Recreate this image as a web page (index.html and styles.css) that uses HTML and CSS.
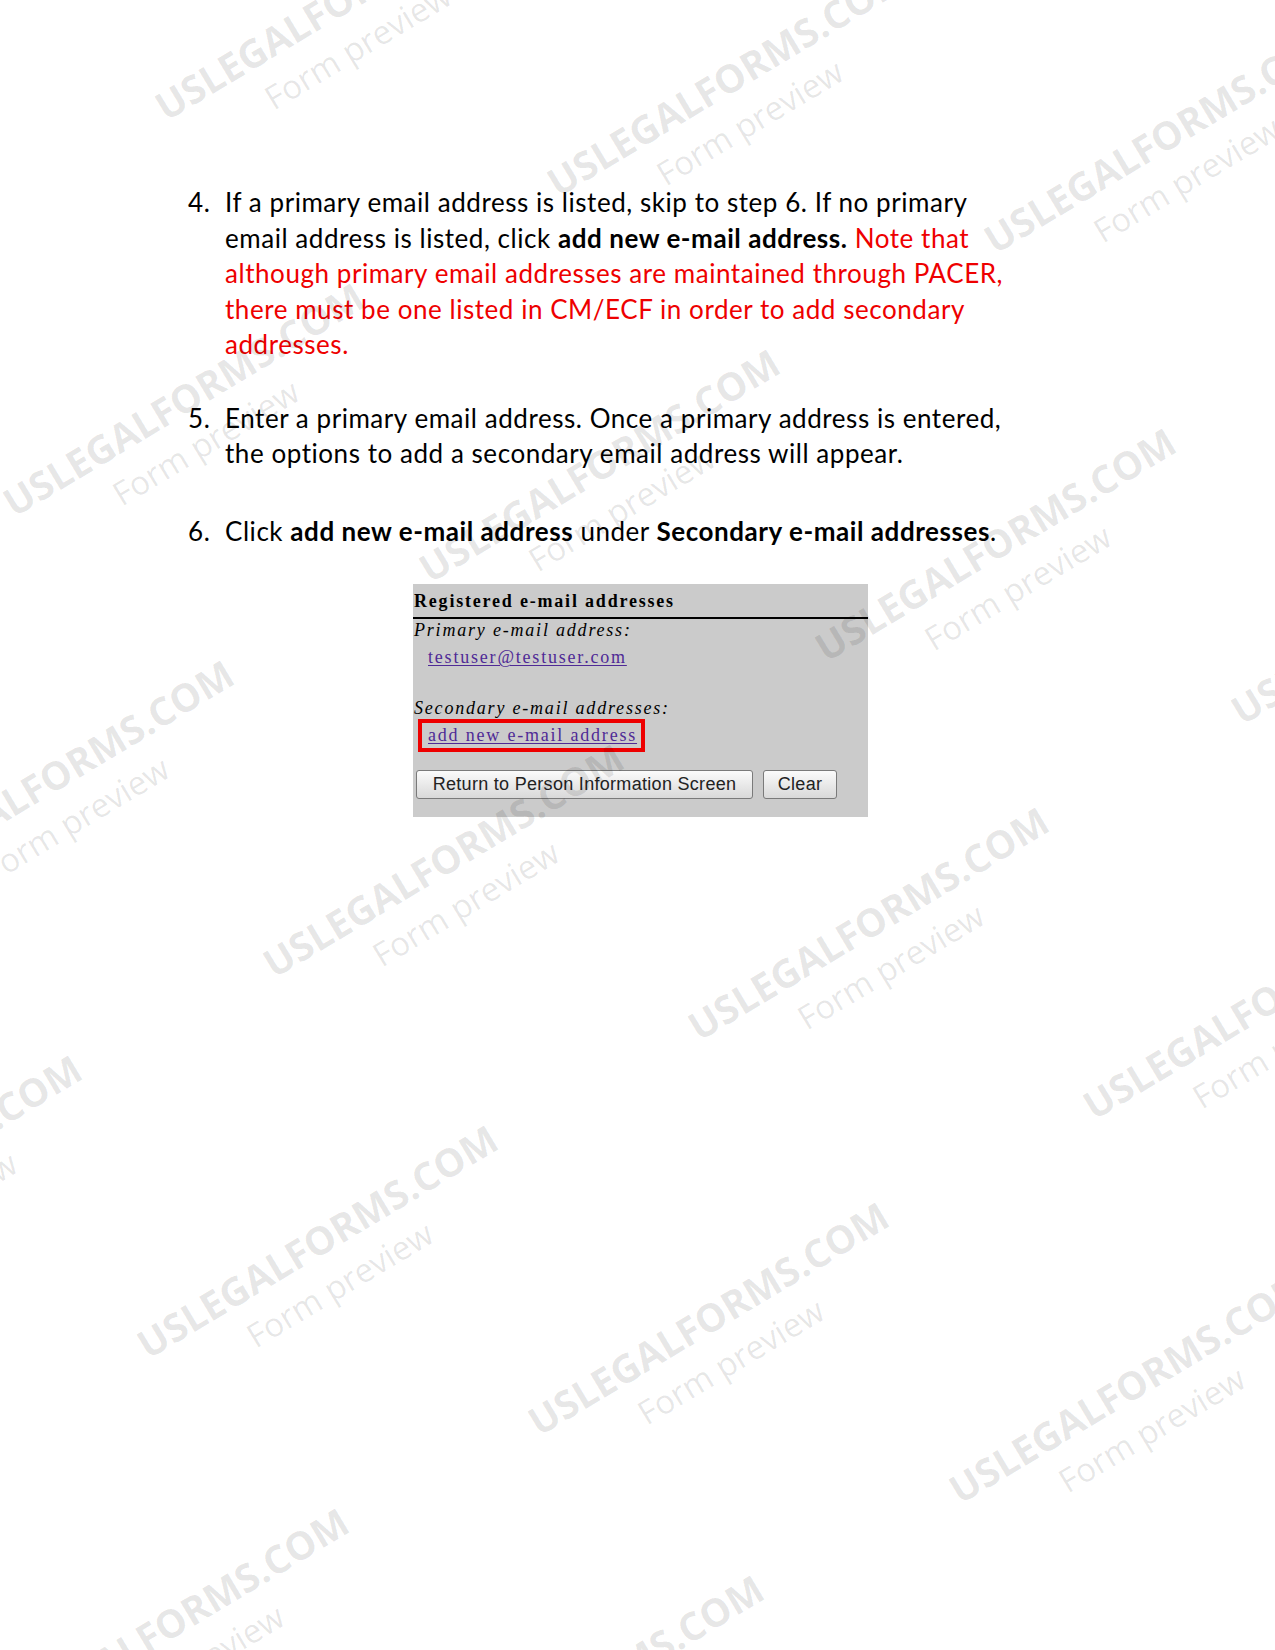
FILE: index.html
```html
<!DOCTYPE html>
<html lang="en">
<head>
  <meta charset="UTF-8">
  <title>Secondary e-mail addresses</title>
  <link rel="stylesheet" href="styles.css">
</head>
<body>
  <main class="page">
    <div class="step step-4">
      <span class="num">4.</span>
      <p class="text">If a primary email address is listed, skip to step 6. If no primary email address is listed, click <b>add new e-mail address.</b> <span class="note">Note that although primary email addresses are maintained through PACER, there must be one listed in CM/ECF in order to add secondary addresses.</span></p>
    </div>

    <div class="step step-5">
      <span class="num">5.</span>
      <p class="text">Enter a primary email address. Once a primary address is entered, the options to add a secondary email address will appear.</p>
    </div>

    <div class="step step-6">
      <span class="num">6.</span>
      <p class="text">Click <b>add new e-mail address</b> under <b>Secondary e-mail addresses</b>.</p>
    </div>

    <div class="panel">
      <div class="panel-title">Registered e-mail addresses</div>
      <div class="label">Primary e-mail address:</div>
      <div class="addr"><a href="#">testuser@testuser.com</a></div>
      <div class="label label-second">Secondary e-mail addresses:</div>
      <div class="highlight"><a href="#">add new e-mail address</a></div>
      <div class="buttons">
        <button class="btn btn-return">Return to Person Information Screen</button>
        <button class="btn btn-clear">Clear</button>
      </div>
    </div>
  </main>

  <div class="watermarks">
    <div class="wm wm-1"><span class="wm-site">USLEGALFORMS.COM</span><span class="wm-sub">Form preview</span></div>
    <div class="wm wm-2"><span class="wm-site">USLEGALFORMS.COM</span><span class="wm-sub">Form preview</span></div>
    <div class="wm wm-3"><span class="wm-site">USLEGALFORMS.COM</span><span class="wm-sub">Form preview</span></div>
    <div class="wm wm-4"><span class="wm-site">USLEGALFORMS.COM</span><span class="wm-sub">Form preview</span></div>
    <div class="wm wm-5"><span class="wm-site">USLEGALFORMS.COM</span><span class="wm-sub">Form preview</span></div>
    <div class="wm wm-6"><span class="wm-site">USLEGALFORMS.COM</span><span class="wm-sub">Form preview</span></div>
    <div class="wm wm-7"><span class="wm-site">USLEGALFORMS.COM</span><span class="wm-sub">Form preview</span></div>
    <div class="wm wm-8"><span class="wm-site">USLEGALFORMS.COM</span><span class="wm-sub">Form preview</span></div>
    <div class="wm wm-9"><span class="wm-site">USLEGALFORMS.COM</span><span class="wm-sub">Form preview</span></div>
    <div class="wm wm-10"><span class="wm-site">USLEGALFORMS.COM</span><span class="wm-sub">Form preview</span></div>
    <div class="wm wm-11"><span class="wm-site">USLEGALFORMS.COM</span><span class="wm-sub">Form preview</span></div>
    <div class="wm wm-12"><span class="wm-site">USLEGALFORMS.COM</span><span class="wm-sub">Form preview</span></div>
    <div class="wm wm-13"><span class="wm-site">USLEGALFORMS.COM</span><span class="wm-sub">Form preview</span></div>
    <div class="wm wm-14"><span class="wm-site">USLEGALFORMS.COM</span><span class="wm-sub">Form preview</span></div>
    <div class="wm wm-15"><span class="wm-site">USLEGALFORMS.COM</span><span class="wm-sub">Form preview</span></div>
    <div class="wm wm-16"><span class="wm-site">USLEGALFORMS.COM</span><span class="wm-sub">Form preview</span></div>
    <div class="wm wm-17"><span class="wm-site">USLEGALFORMS.COM</span><span class="wm-sub">Form preview</span></div>
  </div>
</body>
</html>
```

FILE: styles.css
```css
html, body {
  margin: 0;
  overflow: hidden;
}

body {
  position: relative;
  width: 1275px;
  height: 1650px;
  background-color: #fff;
  color: #000;
  font-family: Lato, "Open Sans", sans-serif;
}

.page {
  padding-top: 185px;
}

.step {
  display: flex;
  font-size: 26px;
  line-height: 35.5px;
  letter-spacing: 0.55px;
}

.step-5 {
  margin-top: 38px;
}

.step-6 {
  margin-top: 42px;
}

.num {
  width: 37px;
  margin-left: 188px;
  flex-shrink: 0;
}

.text {
  margin: 0;
  width: 795px;
}

.text b {
  font-weight: bold;
}

.note {
  color: #ee0000;
}

/* screenshot of the CM/ECF form */
.panel {
  width: 455px;
  height: 228px;
  margin: 35px 0 0 413px;
  padding-top: 5px;
  background-color: #cbcbcb;
  font-family: "Liberation Serif", "Times New Roman", serif;
  font-size: 18px;
  letter-spacing: 1.8px;
  color: #000;
}

.panel-title {
  font-weight: bold;
  line-height: 24px;
  padding: 0 0 4px 1px;
  border-bottom: 2px solid #000;
}

.label {
  font-style: italic;
  line-height: 22px;
  padding-left: 1px;
}

.label-second {
  margin-top: 29px;
}

.addr {
  line-height: 22px;
  margin-top: 5px;
  padding-left: 15px;
}

.panel a {
  color: #4f2a96;
  text-decoration: underline;
  text-decoration-thickness: 1px;
  text-underline-offset: 2px;
}

.highlight {
  display: inline-block;
  margin: 0 0 0 5px;
  padding: 1px 4px 2px 6px;
  border: 4px solid #ee0000;
  line-height: 22px;
}

.buttons {
  display: flex;
  gap: 10px;
  margin: 18px 0 0 3px;
}

.btn {
  height: 29px;
  padding: 0;
  border: 1px solid #7a7a7a;
  border-radius: 3px;
  background: linear-gradient(#fbfbfb, #e6e6e6 60%, #d9d9d9);
  font-family: "Liberation Sans", Arial, sans-serif;
  font-size: 18px;
  letter-spacing: 0.3px;
  color: #222;
}

.btn-return {
  width: 337px;
}

.btn-clear {
  width: 74px;
}

/* watermark overlay */
.watermarks {
  position: absolute;
  top: 0;
  left: 0;
  width: 1275px;
  height: 1650px;
  overflow: hidden;
  pointer-events: none;
}

.wm {
  position: absolute;
  transform-origin: 0 0;
  transform: rotate(-31deg);
  white-space: nowrap;
  font-family: "Open Sans", sans-serif;
  color: rgba(0, 0, 0, 0.1);
}

.wm-site {
  display: block;
  font-size: 39px;
  line-height: 39px;
  font-weight: bold;
}

.wm-sub {
  display: block;
  margin: 13px 0 0 98px;
  font-size: 33px;
  line-height: 33px;
}

.wm-1 { left: 148px; top: 92px; }
.wm-2 { left: 540px; top: 168px; }
.wm-3 { left: 977px; top: 225px; }
.wm-4 { left: -4px; top: 488px; }
.wm-5 { left: 412px; top: 554px; }
.wm-6 { left: 808px; top: 633px; }
.wm-7 { left: -134px; top: 865px; }
.wm-8 { left: 1224px; top: 696px; }
.wm-9 { left: 256px; top: 949px; }
.wm-10 { left: 681px; top: 1012px; }
.wm-11 { left: 1076px; top: 1091px; }
.wm-12 { left: -286px; top: 1260px; }
.wm-13 { left: 130px; top: 1330px; }
.wm-14 { left: 521px; top: 1407px; }
.wm-15 { left: 942px; top: 1475px; }
.wm-16 { left: -19px; top: 1713px; }
.wm-17 { left: 396px; top: 1780px; }
```
